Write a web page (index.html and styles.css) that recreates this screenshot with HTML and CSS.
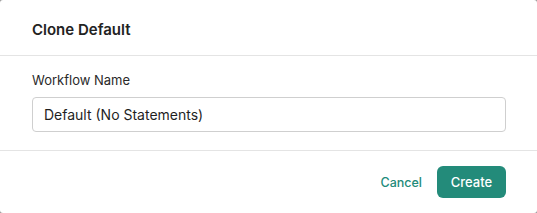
FILE: index.html
```html
<!DOCTYPE html>
<html lang="en">
<head>
    <meta charset="UTF-8">
    <meta name="viewport" content="width=device-width, initial-scale=1.0">
    <title>Clone Default</title>
    <link rel="stylesheet" href="styles.css">
</head>
<body>
    <div class="modal">
        <div class="modal-header">Clone Default</div>
        <div class="modal-body">
            <label class="field-label" for="workflowName">Workflow Name</label>
            <input type="text" id="workflowName" class="field-input" value="Default (No Statements)">
        </div>
        <div class="modal-footer">
            <button type="button" class="cancel-button">Cancel</button>
            <button type="button" class="create-button">Create</button>
        </div>
    </div>
</body>
</html>
```
FILE: styles.css
```css
body {
    font-family: Inter, "Noto Sans", sans-serif;
    margin: 0;
    padding: 0;
    background-color: #9a9a9a;
}
.modal {
    background-color: white;
    border-radius: 3px;
    height: 213px;
    box-sizing: border-box;
}
.modal-header {
    padding: 20px 32px 15px;
    font-size: 15px;
    line-height: 20px;
    font-weight: 600;
    color: #222;
    border-bottom: 1px solid #e4e4e4;
}
.modal-body {
    padding: 16px 31px 18px 32px;
    border-bottom: 1px solid #e4e4e4;
}
.field-label {
    display: block;
    font-size: 13px;
    line-height: 16px;
    font-weight: 400;
    color: #2a2a2a;
    margin-bottom: 9px;
}
.field-input {
    display: block;
    width: 100%;
    box-sizing: border-box;
    height: 35px;
    padding: 0 11px;
    border: 1px solid #cfcfcf;
    border-radius: 4px;
    font-family: inherit;
    font-size: 14px;
    color: #1f1f1f;
}
.field-input:focus {
    outline: none;
    border-color: #238b7a;
}
.modal-footer {
    display: flex;
    justify-content: flex-end;
    align-items: center;
    gap: 15px;
    padding: 15px 31px 0 32px;
}
.cancel-button {
    background: none;
    border: none;
    padding: 0;
    font-family: inherit;
    font-size: 12.5px;
    font-weight: 500;
    color: #238b7a;
    cursor: pointer;
}
.create-button {
    background-color: #238b7a;
    color: white;
    border: none;
    border-radius: 6px;
    height: 32px;
    width: 69px;
    font-family: inherit;
    font-size: 13px;
    font-weight: 500;
    cursor: pointer;
}
.create-button:hover {
    background-color: #1d7a6b;
}
```
